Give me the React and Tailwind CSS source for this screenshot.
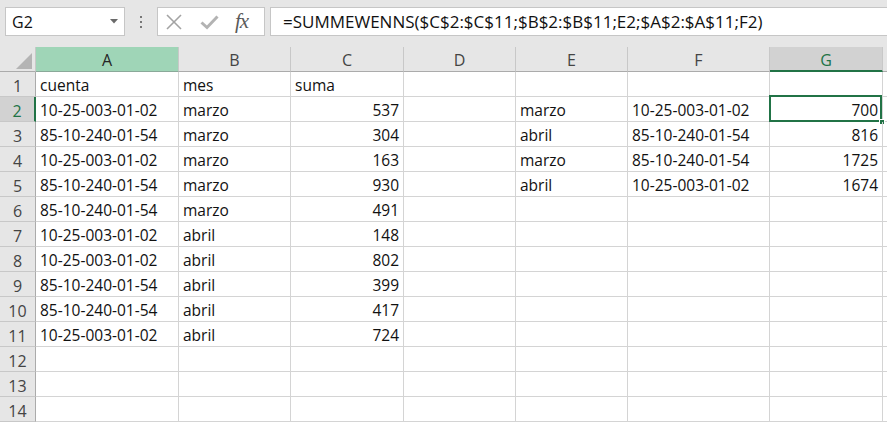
import React from "react";

const COLS = ["A", "B", "C", "D", "E", "F", "G"];

const rows = [
  ["cuenta", "mes", "suma", "", "", "", ""],
  ["10-25-003-01-02", "marzo", 537, "", "marzo", "10-25-003-01-02", 700],
  ["85-10-240-01-54", "marzo", 304, "", "abril", "85-10-240-01-54", 816],
  ["10-25-003-01-02", "marzo", 163, "", "marzo", "85-10-240-01-54", 1725],
  ["85-10-240-01-54", "marzo", 930, "", "abril", "10-25-003-01-02", 1674],
  ["85-10-240-01-54", "marzo", 491, "", "", "", ""],
  ["10-25-003-01-02", "abril", 148, "", "", "", ""],
  ["10-25-003-01-02", "abril", 802, "", "", "", ""],
  ["85-10-240-01-54", "abril", 399, "", "", "", ""],
  ["85-10-240-01-54", "abril", 417, "", "", "", ""],
  ["10-25-003-01-02", "abril", 724, "", "", "", ""],
  ["", "", "", "", "", "", ""],
  ["", "", "", "", "", "", ""],
  ["", "", "", "", "", "", ""],
];

function ColHeader({ label }) {
  if (label === "A") {
    return (
      <div className="h-[25px] bg-[#9fd5b7] border-r border-r-[#c8c8c8] border-b border-b-[#8aa999] flex items-center justify-center pt-[2px] text-[16px] text-[#262626]">
        {label}
      </div>
    );
  }
  if (label === "G") {
    return (
      <div className="h-[25px] bg-[#d2d2d2] border-r border-r-[#c8c8c8] border-b-2 border-b-[#217346] flex items-center justify-center pt-[3px] text-[16px] text-[#217346]">
        {label}
      </div>
    );
  }
  return (
    <div className="h-[25px] bg-[#e6e6e6] border-r border-r-[#c8c8c8] border-b border-b-[#ababab] flex items-center justify-center pt-[2px] text-[16px] text-[#444]">
      {label}
    </div>
  );
}

export default function App() {
  return (
    <div className="w-[887px] h-[423px] overflow-hidden bg-white font-['Open_Sans',sans-serif]">
      {/* Toolbar */}
      <div className="h-[47px] bg-[#e6e6e6] flex items-start pt-[7px] pl-[5px]">
        <div className="w-[120px] h-[29px] bg-white border border-[#c6c6c6] flex items-center justify-between pl-[6px] pr-[6px] text-[16px] text-[#111]">
          <span>G2</span>
          <svg width="8" height="5" viewBox="0 0 8 5">
            <polygon points="0,0 8,0 4,4.5" fill="#6a6a6a" />
          </svg>
        </div>
        <div className="w-[32px] h-[29px] flex flex-col items-center justify-center gap-[3px]">
          <div className="w-[2px] h-[2px] bg-[#777]" />
          <div className="w-[2px] h-[2px] bg-[#777]" />
          <div className="w-[2px] h-[2px] bg-[#777]" />
        </div>
        <div className="w-[108px] h-[29px] bg-white border border-[#c6c6c6] flex items-center pl-[8px]">
          <svg width="16" height="16" viewBox="0 0 16 16">
            <line x1="1" y1="1" x2="15" y2="15" stroke="#a3a3a3" strokeWidth="1.6" />
            <line x1="15" y1="1" x2="1" y2="15" stroke="#a3a3a3" strokeWidth="1.6" />
          </svg>
          <svg width="19" height="16" viewBox="0 0 19 16" className="ml-[18px]">
            <polyline points="1.5,8.5 7,13.5 17.5,2.5" fill="none" stroke="#b3b3b3" strokeWidth="3" />
          </svg>
          <span className="ml-[16px] font-['Liberation_Serif',serif] italic text-[21px] leading-none text-[#5a5a5a] tracking-[-1px]">
            fx
          </span>
        </div>
        <div className="ml-[5px] flex-1 h-[29px] bg-white border border-r-0 border-[#c6c6c6] flex items-center pl-[12px] text-[17px] text-[#111] whitespace-nowrap">
          =SUMMEWENNS($C$2:$C$11;$B$2:$B$11;E2;$A$2:$A$11;F2)
        </div>
      </div>

      {/* Grid */}
      <div className="grid grid-cols-[36px_143px_112px_113px_112px_112px_142px_113px_1fr] text-[15.5px] text-[#111]">
        {/* header row */}
        <div className="h-[25px] bg-[#e6e6e6] border-r border-r-[#c8c8c8] border-b border-b-[#ababab] flex items-end justify-end pr-[3px] pb-[2px]">
          <svg width="16" height="16" viewBox="0 0 16 16">
            <polygon points="16,0 16,16 0,16" fill="#b4b4b4" />
          </svg>
        </div>
        {COLS.map((c) => (
          <ColHeader key={c} label={c} />
        ))}
        <div className="h-[25px] bg-[#e6e6e6] border-b border-b-[#ababab]" />

        {rows.map((r, i) => {
          const rowNum = i + 1;
          const sel = rowNum === 2;
          return (
            <React.Fragment key={i}>
              <div
                className={
                  sel
                    ? "h-[25px] bg-[#d2d2d2] border-r-2 border-r-[#217346] border-b border-b-[#c8c8c8] flex items-center justify-center pt-[3px] text-[16px] text-[#217346]"
                    : "h-[25px] bg-[#e6e6e6] border-r border-r-[#ababab] border-b border-b-[#c8c8c8] flex items-center justify-center pt-[3px] text-[16px] text-[#444]"
                }
              >
                {rowNum}
              </div>
              {r.map((v, j) => {
                const isNum = typeof v === "number";
                const isSel = sel && j === 6;
                return (
                  <div
                    key={j}
                    className={
                      "relative h-[25px] border-r border-b border-[#d4d4d4] flex items-center pt-[3px] whitespace-nowrap overflow-visible " +
                      (isNum ? "justify-end pr-[4px]" : "justify-start pl-[4px]")
                    }
                  >
                    {v}
                    {isSel && (
                      <>
                        <div className="absolute -top-[2px] -left-[1px] right-0 -bottom-[1px] border-2 border-[#217346] pointer-events-none" />
                        <div className="absolute -right-[3px] -bottom-[4px] w-[6px] h-[6px] bg-[#217346] border border-white" />
                      </>
                    )}
                  </div>
                );
              })}
              <div className="h-[25px] border-b border-[#d4d4d4]" />
            </React.Fragment>
          );
        })}
      </div>
    </div>
  );
}
